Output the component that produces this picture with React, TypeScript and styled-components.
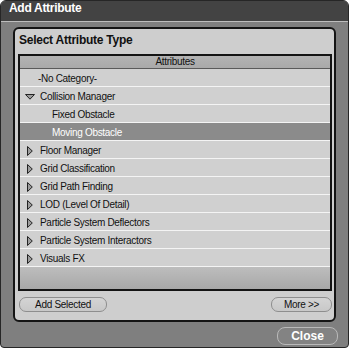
import React from "react";
import styled, { createGlobalStyle } from "styled-components";

const GlobalStyle = createGlobalStyle`
  html, body {
    margin: 0;
    padding: 0;
    background: #ffffff;
  }
  body {
    font-family: "Liberation Sans", Arial, sans-serif;
  }
  * { box-sizing: border-box; }
`;

const Window = styled.div`
  width: 349px;
  height: 348px;
  display: flex;
  flex-direction: column;
  background: #7f7f7f;
  border: 1px solid #262626;
  border-radius: 6px 6px 4px 4px;
  overflow: hidden;
`;

const TitleBar = styled.div`
  height: 21px;
  flex: none;
  background: #434343;
  border-bottom: 1px solid #bdbdbd;
  color: #ffffff;
  font-weight: bold;
  font-size: 12px;
  line-height: 15px;
  letter-spacing: -0.3px;
  padding-left: 8px;
`;

const Body = styled.div`
  flex: 1;
  display: flex;
  flex-direction: column;
  padding: 5px 12px 2px 12px;
  gap: 5px;
`;

const Panel = styled.div`
  height: 295px;
  flex: none;
  display: flex;
  flex-direction: column;
  background: #cecece;
  border: 2px solid #141414;
  border-radius: 6px;
  padding: 4px 2px 8px 3px;
`;

const PanelHeading = styled.div`
  font-weight: bold;
  font-size: 12px;
  line-height: 14px;
  letter-spacing: -0.25px;
  color: #111111;
  padding-left: 1px;
  margin-bottom: 7px;
`;

const ListBox = styled.div`
  height: 237px;
  flex: none;
  display: flex;
  flex-direction: column;
  border: 2px solid #141414;
  background: #d0d0d0;
  font-size: 10px;
  letter-spacing: -0.3px;
  color: #111111;
`;

const ListHeader = styled.div`
  height: 13px;
  flex: none;
  background: linear-gradient(#b3b3b3, #a9a9a9);
  border-bottom: 1px solid #5a5a5a;
  line-height: 12px;
  text-align: center;
`;

const Row = styled.div<{ $indent: number; $selected?: boolean }>`
  height: 18px;
  flex: none;
  display: flex;
  align-items: flex-start;
  padding-top: 2px;
  padding-left: ${(p) => p.$indent}px;
  line-height: 15px;
  white-space: nowrap;
  border-bottom: 1px solid #f4f4f4;
  background: ${(p) => (p.$selected ? "#8b8b8b" : "#d0d0d0")};
  color: ${(p) => (p.$selected ? "#ffffff" : "#111111")};

  &:last-of-type {
    border-bottom-color: #141414;
  }
`;

const IconSlot = styled.span`
  width: 15px;
  height: 15px;
  flex: none;
  display: flex;
  align-items: center;
`;

const ListFill = styled.div`
  flex: 1;
  background: linear-gradient(#bdbdbd, #a8a8a8);
`;

const ButtonRow = styled.div`
  margin-top: 6px;
  display: flex;
  justify-content: space-between;
  padding-left: 1px;
`;

const PillButton = styled.button<{ $width: number }>`
  width: ${(p) => p.$width}px;
  height: 15px;
  padding: 0;
  margin: 0;
  border: 1px solid #8e8e8e;
  border-radius: 7px;
  background: linear-gradient(#d4d4d4, #c8c8c8);
  font-family: "Liberation Sans", Arial, sans-serif;
  font-size: 10px;
  line-height: 13px;
  letter-spacing: -0.3px;
  color: #111111;
  text-align: center;
`;

const Footer = styled.div`
  display: flex;
  justify-content: flex-end;
  padding-right: 0;
  margin-right: -2px;
`;

const CloseButton = styled.button`
  width: 61px;
  height: 18px;
  padding: 0;
  margin: 0;
  border: 1px solid #b9b9b9;
  border-radius: 8px;
  background: #838383;
  font-family: "Liberation Sans", Arial, sans-serif;
  font-weight: bold;
  font-size: 12px;
  line-height: 16px;
  color: #ffffff;
  text-align: center;
`;

type Kind = "none" | "open" | "closed" | "child";

interface Item {
  label: string;
  kind: Kind;
  selected?: boolean;
}

const items: Item[] = [
  { label: "-No Category-", kind: "none" },
  { label: "Collision Manager", kind: "open" },
  { label: "Fixed Obstacle", kind: "child" },
  { label: "Moving Obstacle", kind: "child", selected: true },
  { label: "Floor Manager", kind: "closed" },
  { label: "Grid Classification", kind: "closed" },
  { label: "Grid Path Finding", kind: "closed" },
  { label: "LOD (Level Of Detail)", kind: "closed" },
  { label: "Particle System Deflectors", kind: "closed" },
  { label: "Particle System Interactors", kind: "closed" },
  { label: "Visuals FX", kind: "closed" },
];

const Expander: React.FC<{ open: boolean }> = ({ open }) =>
  open ? (
    <svg width="10" height="6" viewBox="0 0 10 6" style={{ marginTop: 1 }}>
      <polygon points="0.5,0.5 9.5,0.5 5,5.2" fill="#9c9c9c" stroke="#222" strokeWidth="1" />
    </svg>
  ) : (
    <svg width="6" height="10" viewBox="0 0 6 10" style={{ marginLeft: 2, marginTop: 1 }}>
      <polygon points="0.5,0.5 5.3,5 0.5,9.5" fill="#9c9c9c" stroke="#222" strokeWidth="1" />
    </svg>
  );

const indentFor = (k: Kind) => (k === "none" ? 18 : k === "child" ? 32 : 5);

export default function App() {
  return (
    <>
      <GlobalStyle />
      <Window>
        <TitleBar>Add Attribute</TitleBar>
        <Body>
          <Panel>
            <PanelHeading>Select Attribute Type</PanelHeading>
            <ListBox>
              <ListHeader>Attributes</ListHeader>
              {items.map((it) => (
                <Row key={it.label} $indent={indentFor(it.kind)} $selected={it.selected}>
                  {(it.kind === "open" || it.kind === "closed") && (
                    <IconSlot>
                      <Expander open={it.kind === "open"} />
                    </IconSlot>
                  )}
                  {it.label}
                </Row>
              ))}
              <ListFill />
            </ListBox>
            <ButtonRow>
              <PillButton $width={88}>Add Selected</PillButton>
              <PillButton $width={61}>More &gt;&gt;</PillButton>
            </ButtonRow>
          </Panel>
          <Footer>
            <CloseButton>Close</CloseButton>
          </Footer>
        </Body>
      </Window>
    </>
  );
}
